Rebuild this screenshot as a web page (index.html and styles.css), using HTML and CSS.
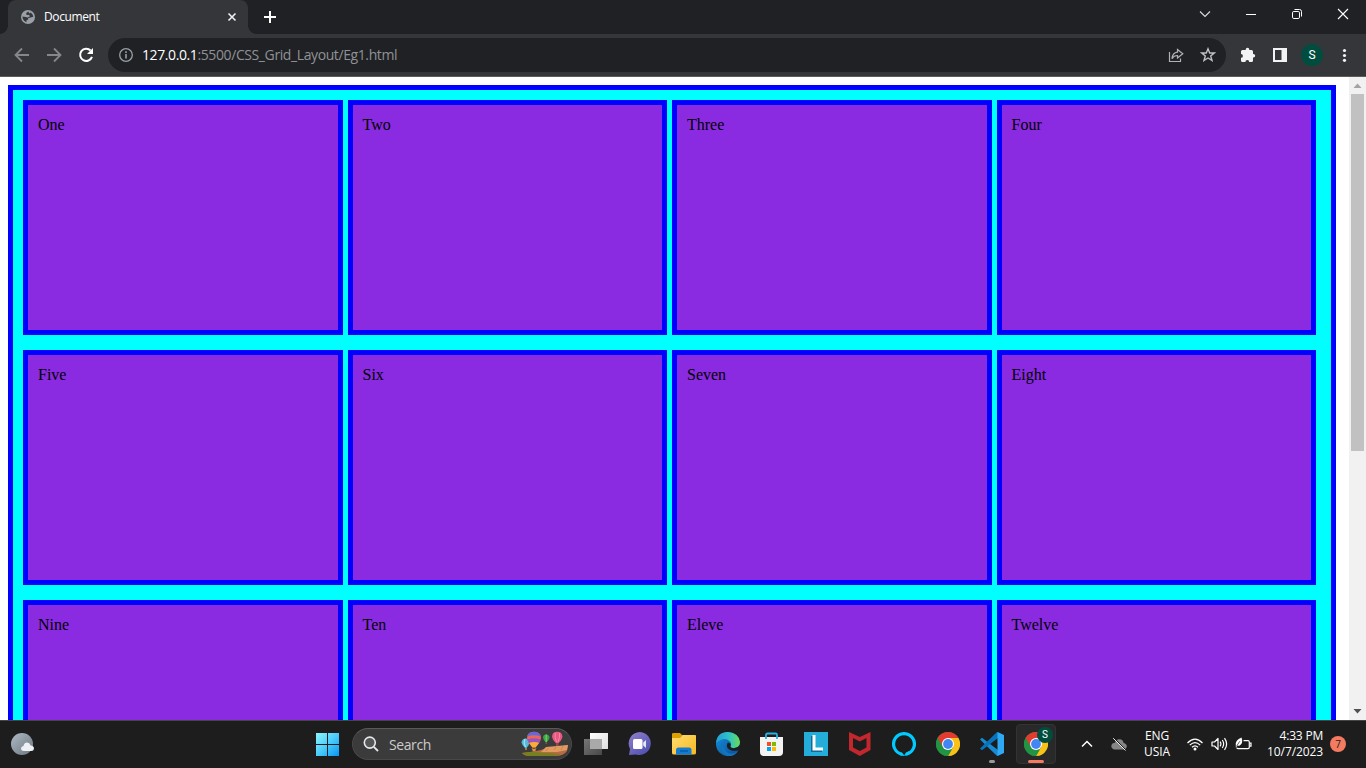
FILE: index.html
```html
<!DOCTYPE html>
<html lang="en">
<head>
<meta charset="utf-8">
<title>Document</title>
<link rel="stylesheet" href="styles.css">
</head>
<body>
<header class="tabstrip">
  <div class="tab">
    <svg class="favicon" width="14" height="14" viewBox="0 0 14 14"><circle cx="7" cy="7" r="7" fill="#9aa0a6"/><path d="M7.3 1.6Q5 2.6 5 4.3Q6.2 5.3 7.6 4.7Q9.2 5.2 8.6 6.7L6.5 7.4L4.5 6.9L1.5 6.6Q1.5 10.8 5.5 12.2L5.4 10.5L7.4 9.2L7 8.3L9.5 7.6L12.3 6.8Q12.2 4.2 9.6 2.5L8.3 3.4Z" fill="#35363a"/></svg>
    <span class="tab-title">Document</span>
    <svg class="tab-close" width="10" height="10" viewBox="0 0 10 10"><path d="M1.5 1.5L8.5 8.5M8.5 1.5L1.5 8.5" stroke="#f1f1f1" stroke-width="1.6"/></svg>
  </div>
  <svg class="new-tab" width="12" height="12" viewBox="0 0 12 12"><path d="M6 0V12M0 6H12" stroke="#fff" stroke-width="2"/></svg>
  <div class="window-controls">
    <svg width="46" height="28" viewBox="0 0 46 28"><path d="M18 11.5L23 16.5L28 11.5" fill="none" stroke="#ddd" stroke-width="1.1"/></svg>
    <svg width="46" height="28" viewBox="0 0 46 28"><path d="M18 14.5H28" stroke="#fff"/></svg>
    <svg width="46" height="28" viewBox="0 0 46 28"><g fill="none" stroke="#fff"><rect x="18.5" y="11.5" width="7" height="7" rx="1.3"/><path d="M20.5 9.5H25.5Q27.5 9.5 27.5 11.5V16.5"/></g></svg>
    <svg width="46" height="28" viewBox="0 0 46 28"><path d="M18 9L28 19M28 9L18 19" stroke="#fff" stroke-width="1.1"/></svg>
  </div>
</header>
<nav class="toolbar">
  <svg width="20" height="20" viewBox="0 0 20 20"><path d="M17 10H4M10 3.5L3.5 10L10 16.5" fill="none" stroke="#85878a" stroke-width="1.8"/></svg>
  <svg width="20" height="20" viewBox="0 0 20 20"><path d="M3 10H16M10 3.5L16.5 10L10 16.5" fill="none" stroke="#85878a" stroke-width="1.8"/></svg>
  <svg width="20" height="20" viewBox="0 0 20 20"><path d="M14.6 5.5A6.1 6.1 0 1 0 16 11.8" fill="none" stroke="#fff" stroke-width="2"/><path d="M17 3V9H11Z" fill="#fff"/></svg>
  <div class="omnibox">
    <svg class="info" width="16" height="16" viewBox="0 0 16 16"><circle cx="8" cy="8" r="6.3" fill="none" stroke="#9aa0a6" stroke-width="1.3"/><path d="M8 7V11.5M8 4.3V5.9" stroke="#9aa0a6" stroke-width="1.6"/></svg>
    <span class="url"><b>127.0.0.1</b>:5500/CSS_Grid_Layout/Eg1.html</span>
    <svg class="share" width="16" height="16" viewBox="0 0 16 16"><path d="M1.5 5V14.5H12.5V11.5" fill="none" stroke="#b0b2b5" stroke-width="1.2"/><path d="M9.5 2.5L14.8 6.8L9.5 11V8.5Q6 8.4 4 11.7Q4.5 5.7 9.5 5.2Z" fill="none" stroke="#b0b2b5" stroke-width="1.2"/></svg>
    <svg width="16" height="16" viewBox="0 0 16 16"><path d="M8 1.8L9.7 6H14.2L10.7 8.9L12 13.5L8 11L4 13.5L5.3 8.9L1.8 6H6.3Z" fill="none" stroke="#bdc1c6" stroke-width="1.4"/></svg>
  </div>
  <svg width="20" height="20" viewBox="0 0 20 20"><path d="M4.5 5H7.7V4.6A1.8 1.8 0 0 1 11.3 4.6V5H13.5Q15 5 15 6.5V9H15.4A1.8 1.8 0 0 1 15.4 12.6H15V15.5Q15 17 13.5 17H11.2A1.9 1.9 0 0 0 7.4 17H4.5Q3 17 3 15.5V12.8A1.9 1.9 0 0 0 3 9V6.5Q3 5 4.5 5Z" fill="#f1f3f4"/></svg>
  <svg width="20" height="20" viewBox="0 0 20 20"><path d="M3 3H17V17H3ZM5 5V15H11.5V5Z" fill="#f1f3f4" fill-rule="evenodd"/></svg>
  <span class="avatar">S</span>
  <svg width="20" height="20" viewBox="0 0 20 20" fill="#f1f3f4"><circle cx="10.5" cy="5.5" r="1.6"/><circle cx="10.5" cy="10.5" r="1.6"/><circle cx="10.5" cy="15.3" r="1.6"/></svg>
</nav>
<div class="viewport">
  <main class="page">
    <div class="grid">
      <div class="item">One</div><div class="item">Two</div><div class="item">Three</div><div class="item">Four</div>
      <div class="item">Five</div><div class="item">Six</div><div class="item">Seven</div><div class="item">Eight</div>
      <div class="item">Nine</div><div class="item">Ten</div><div class="item">Eleve</div><div class="item">Twelve</div>
    </div>
  </main>
  <aside class="scrollbar">
    <svg width="17" height="17" viewBox="0 0 17 17"><path d="M4.5 11L8.5 6.5L12.5 11Z" fill="#a3a3a3"/></svg>
    <div class="thumb"></div>
    <svg class="down" width="17" height="17" viewBox="0 0 17 17"><path d="M4.5 6L8.5 10.5L12.5 6Z" fill="#505050"/></svg>
  </aside>
</div>
<footer class="taskbar">
  <svg class="weather" width="24" height="24" viewBox="0 0 24 24"><defs><linearGradient id="moon" x1="0" y1="0" x2="1" y2="1"><stop stop-color="#b0bac4"/><stop offset="1" stop-color="#6c7680"/></linearGradient></defs><circle cx="11" cy="12" r="11" fill="url(#moon)"/><path d="M12.8 19Q10 18.6 10 16.2Q10.4 14.2 12.5 14Q13 10.8 16 10.6Q18.8 10.8 19.6 13.5Q23 13.8 23 16.5Q22.8 19 20.3 19Z" fill="#edf1f6"/></svg>
  <svg class="start" width="23" height="23" viewBox="0 0 23 23"><defs><linearGradient id="win" x1="0" y1="0" x2="23" y2="23" gradientUnits="userSpaceOnUse"><stop stop-color="#8df5fc"/><stop offset=".5" stop-color="#4cccfa"/><stop offset="1" stop-color="#0795f5"/></linearGradient></defs><path d="M0 0H11V11H0ZM12 0H23V11H12ZM0 12H11V23H0ZM12 12H23V23H12Z" fill="url(#win)"/></svg>
  <div class="search">
    <svg width="16" height="16" viewBox="0 0 16 16"><circle cx="6.8" cy="6.6" r="5.5" fill="#565656" stroke="#e4e8ed" stroke-width="1.6"/><path d="M10.8 10.8L15 15" stroke="#e4e8ed" stroke-width="1.8"/></svg>
    <span>Search</span>
    <svg class="balloons" width="48" height="26" viewBox="0 0 48 26">
      <path d="M1 22Q18 20 23 18L47 14L46 20Q43 25 34 25H7Q2 24 1 22Z" fill="#b96b42"/><path d="M25 16L47 14L46 19L36 21H20Z" fill="#e09a62"/><path d="M1 22Q10 20 23 22L40 23Q36 25 31 25H7Q3 24 1 22Z" fill="#75801f"/><path d="M27 17L25 20M35 16L33 19M42 15L40 19" stroke="#c67b4e" stroke-width=".8"/>
      <path d="M.5 11.5Q1 7.5 5 7.5Q8.4 8 8.5 11.5Q8.2 14.5 5.5 17H4Q1 14 .5 11.5Z" fill="#55b9dd"/><path d="M4 7.8Q2 12 4.5 16" fill="none" stroke="#b3e7ef"/><path d="M4 18H6" stroke="#a87848" stroke-width="2"/>
      <path d="M6 7Q6.3.8 13 .7Q19.7.8 20 7Q19.5 11 14.5 16.5H11.5Q6.2 11 6 7Z" fill="#ef6752"/><path d="M6.2 5.5Q7.4.9 13 .7Q18.6.9 19.8 5.5Q13 3 6.2 5.5Z" fill="#6269dd"/><path d="M6.1 8.5Q13 6 19.8 8.5L18.2 12Q13 10 8 12Z" fill="#9a54c0"/><path d="M8.2 12Q13 10 18 12L14.5 16.5H11.5Z" fill="#f5af37"/><path d="M11 17L12 19M15 17L14 19" stroke="#d59646" stroke-width=".7"/><path d="M11.5 19H14.5" stroke="#d59646" stroke-width="2.5"/>
      <path d="M22 6.5Q22.2 3.5 25.2 3.5Q28.2 3.7 28.5 6.5Q28 9 25.9 11H24.6Q22.3 9 22 6.5Z" fill="#35a64b"/><path d="M25.2 3.5V11" stroke="#8cd957"/><path d="M24.5 12H26" stroke="#a87848"/>
      <path d="M31 5.8Q31.2.7 36.2.7Q41.2.8 41.5 5.8Q41 9.2 37.3 12.6H35.2Q31.3 9.2 31 5.8Z" fill="#e95883"/><path d="M34.2 2Q33.5 6 35.5 11M38.5 2Q39.3 6 37 11" fill="none" stroke="#f58a9a"/><path d="M35 14H37.5" stroke="#9b5444" stroke-width="1.7"/>
    </svg>
  </div>
  <div class="apps">
    <span class="app"><svg width="24" height="24" viewBox="0 0 24 24"><defs><linearGradient id="tv1" x2="1" y2="1"><stop stop-color="#fff"/><stop offset="1" stop-color="#ddd"/></linearGradient><linearGradient id="tv2" x2="1" y2="1"><stop stop-color="#777"/><stop offset="1" stop-color="#484848"/></linearGradient></defs><path d="M0 7H18V23H0Z" fill="url(#tv2)"/><path d="M6 1H24V17H6Z" fill="url(#tv1)"/><path d="M6 7H18V17H6Z" fill="#a9a9a9"/></svg></span>
    <span class="app"><svg width="24" height="24" viewBox="0 0 24 24"><defs><linearGradient id="chat" x2=".8" y2="1"><stop stop-color="#9481cc"/><stop offset="1" stop-color="#4c50b0"/></linearGradient></defs><path d="M12 0A11.5 11.5 0 1 1 8 22.5L1 23L2 17A11.5 11.5 0 0 1 12 0Z" fill="url(#chat)"/><rect x="5" y="7" width="9.5" height="10" rx="1.5" fill="#fff"/><path d="M15.2 10.5L18 8V16L15.2 13.5Z" fill="#e4e5fb"/></svg></span>
    <span class="app"><svg width="24" height="24" viewBox="0 0 24 24"><defs><linearGradient id="folder" y2="1" x2="1"><stop stop-color="#ffdd71"/><stop offset="1" stop-color="#f6b820"/></linearGradient></defs><path d="M0 2Q0 1 1.5 1H8L10 3H22Q24 3 24 5V10H0Z" fill="#dda000"/><path d="M0 6H8L11 3H23Q24 3 24 4V21Q24 22.5 22 22.5H2Q0 22.5 0 21Z" fill="url(#folder)"/><path d="M4 22.5V18Q4 15.5 6.5 15.5H17Q19.5 15.5 19.5 18V22.5Z" fill="#147cd0"/><path d="M8 19H16" stroke="#0757a1" stroke-width="1.3"/></svg></span>
    <span class="app"><svg width="24" height="24" viewBox="0 0 24 24"><defs><linearGradient id="edgeTop"><stop stop-color="#219ed7"/><stop offset=".55" stop-color="#31c3c4"/><stop offset="1" stop-color="#68dc52"/></linearGradient><linearGradient id="edgeLow" x2="1" y2="1"><stop stop-color="#1594df"/><stop offset="1" stop-color="#0a4795"/></linearGradient></defs><circle cx="12" cy="12" r="12" fill="url(#edgeLow)"/><path d="M0 11Q1 0 12 0Q23 1 24 10Q24 15.5 18 16Q14 16 14.5 14Q16 12 14 9.5Q8 4 0 11Z" fill="url(#edgeTop)"/><path d="M8.5 11Q6.5 17 12 21Q17 23 22 19Q18 25 11 24Q4 21 5 14Q6 8 11 8Q9 9 8.5 11Z" fill="#1274bd"/><path d="M14.5 14Q14 16 18 16.2Q21.5 16.2 24 13V17L22.5 18.3Q15 20 11.5 16Q10 13 12 10.5Q15.5 11 14.5 14Z" fill="#1d1d1d"/></svg></span>
    <span class="app"><svg width="24" height="24" viewBox="0 0 24 24"><path d="M0 5H23V20Q23 24 19 24H4Q0 24 0 20Z" fill="#f3f3f3"/><path d="M6 7V3Q6 1.5 7.5 1.5H15.5Q17 1.5 17 3V7" fill="none" stroke="#28b0e6" stroke-width="1.8"/><path d="M7 10H11V14H7Z" fill="#f25022"/><path d="M12 10H16V14H12Z" fill="#7fba00"/><path d="M7 15H11V19H7Z" fill="#00a4ef"/><path d="M12 15H16V19H12Z" fill="#ffb900"/></svg></span>
    <span class="app"><svg width="24" height="24" viewBox="0 0 24 24"><path d="M0 0H24V24H0Z" fill="#24add9"/><path d="M9 4V18H18" fill="none" stroke="#116b99" stroke-width="4"/><path d="M10 3V17H19" fill="none" stroke="#fff" stroke-width="3"/></svg></span>
    <span class="app"><svg width="24" height="24" viewBox="0 0 24 24"><path d="M1 0L11.8 5L22.5 0V18L11.8 24L1 18ZM5 6V15.5L11.8 19L18.5 15.5V6L11.8 9.5Z" fill="#c1272d" fill-rule="evenodd"/></svg></span>
    <span class="app"><svg width="24" height="24" viewBox="0 0 24 24"><path d="M10 22.2A10.4 10.4 0 1 1 14 22.2" fill="none" stroke="#00caff" stroke-width="3.2"/><path d="M9 20.5Q12 21.5 12 24Q9.5 24 7.5 23ZM17 19Q13 20.5 12 24Q16 24 19 21Z" fill="#00caff"/></svg></span>
    <span class="app"><svg width="24" height="24" viewBox="0 0 24 24"><circle cx="12" cy="12" r="12" fill="#229342"/><path d="M1.6 6A12 12 0 0 1 22.4 6L12 12L6.8 15Z" fill="#e33b2e"/><path d="M12 6H22.4A12 12 0 0 1 12 24L17.2 15Z" fill="#fbc116"/><path d="M1.6 6L6.8 15L12 18H15.5L12 24A12 12 0 0 1 1.6 6Z" fill="#229342"/><circle cx="12" cy="12" r="6" fill="#fff"/><circle cx="12" cy="12" r="4.9" fill="#4285f4"/></svg></span>
    <span class="app running"><svg width="24" height="24" viewBox="0 0 24 24"><path d="M0 7.5L2 5.8L18 18V24L16.5 23.5Z" fill="#168bd2"/><path d="M0 16.5L2 18.2L18 6V0L16.5.5Z" fill="#0873bd"/><path d="M17.5 0L24 3V21L17.5 24Z" fill="#2eaaf4"/></svg></span>
    <span class="app active"><svg width="24" height="24" viewBox="0 0 24 24"><circle cx="12" cy="12" r="12" fill="#229342"/><path d="M1.6 6A12 12 0 0 1 22.4 6L12 12L6.8 15Z" fill="#e33b2e"/><path d="M12 6H22.4A12 12 0 0 1 12 24L17.2 15Z" fill="#fbc116"/><path d="M1.6 6L6.8 15L12 18H15.5L12 24A12 12 0 0 1 1.6 6Z" fill="#229342"/><circle cx="12" cy="12" r="6" fill="#fff"/><circle cx="12" cy="12" r="4.9" fill="#4285f4"/></svg><i class="profile">S</i></span>
  </div>
  <div class="tray">
    <svg class="chevron" width="12" height="8" viewBox="0 0 12 8"><path d="M1 6.5L6 1.5L11 6.5" fill="none" stroke="#fff" stroke-width="1.5"/></svg>
    <svg class="cloud" width="16" height="14" viewBox="0 0 16 14"><path d="M4 12.5Q.2 12 .3 8.7Q1 5.8 4 5.8Q5 2 8.5 2.2Q12 2.4 12.7 6Q15.8 6.5 15.8 9.5Q15.3 12.5 12.5 12.5Z" fill="#858585"/><path d="M3 1L15 13" stroke="#1d1d1d"/><path d="M2.2 1.2L14.5 13.5" stroke="#eee"/></svg>
    <div class="lang"><span>ENG</span><span>USIA</span></div>
    <svg class="wifi" width="16" height="13" viewBox="0 0 16 13"><g fill="none" stroke="#fff" stroke-width="1.2"><path d="M.5 5Q8-2.6 15.5 5"/><path d="M2.8 7.2Q8 2 13.2 7.2"/><path d="M5 9.3Q8 6.4 11 9.3"/></g><circle cx="8" cy="11" r="1.5" fill="#fff"/></svg>
    <svg class="sound" width="17" height="14" viewBox="0 0 17 14"><g fill="none" stroke="#fff" stroke-width="1.2"><path d="M1 5H3.5L7 1.5V12.5L3.5 9H1Z" stroke-linejoin="round"/><path d="M9 4.7Q10.8 7 9 9.3M11.3 3Q14 7 11.3 11M13.5 1.2Q17.7 7 13.5 12.8"/></g></svg>
    <svg class="battery" width="17" height="14" viewBox="0 0 17 14"><path d="M8.5 3.6H13Q14.3 3.6 14.3 5V10.3Q14.3 11.6 13 11.6H3Q1.8 11.6 1.8 10.5M15 6.1H16V9.1H15" fill="none" stroke="#fff" stroke-width="1.2"/><path d="M.8 8.2Q0 3.2 6.5.5Q8.4 5.8 5.3 8Q3.8 9.2 2.2 8.7L.8 10.6Z" fill="#fff"/><path d="M1.6 9L4.9 4.2" stroke="#1d1d1d" stroke-width=".7"/></svg>
    <div class="clock"><span class="time">4:33 PM</span><span>10/7/2023</span></div>
    <span class="count">7</span>
  </div>
</footer>
</body>
</html>
```
FILE: styles.css
```css
* { box-sizing: border-box; }
body { margin: 0; width: 1366px; height: 768px; overflow: hidden; display: flex; flex-direction: column; font-family: "Open Sans", "Noto Sans", sans-serif; }
svg { display: block; flex: none; }
.tabstrip { height: 34px; flex: none; background: #202124; display: flex; padding-left: 8px; }
.tab { position: relative; width: 240px; height: 34px; display: flex; align-items: center; padding: 0 11px 0 13px; background: #35363a; border-radius: 8px 8px 0 0; color: #fff; }
.tab::before, .tab::after { content: ""; position: absolute; bottom: 0; width: 8px; height: 8px; }
.tab::before { left: -8px; background: radial-gradient(circle at 0 0, #202124 7.5px, #35363a 8px); }
.tab::after { right: -8px; background: radial-gradient(circle at 100% 0, #202124 7.5px, #35363a 8px); }
.tab-title { margin-left: 9px; font-size: 12px; line-height: 16px; letter-spacing: -.4px; }
.tab-close { margin-left: auto; }
.new-tab { margin: 11px 0 0 16px; }
.window-controls { display: flex; margin-left: auto; }

.toolbar { height: 43px; flex: none; display: flex; align-items: center; gap: 12px; padding: 0 12px; background: #35363a; border-bottom: 1px solid #5b5b5e; }
.omnibox { flex: 1; height: 34px; display: flex; align-items: center; padding: 0 10px; border-radius: 17px; background: #202124; }
.url { margin-left: 8px; color: #8f9296; font-size: 14px; line-height: 20px; letter-spacing: -.4px; white-space: nowrap; }
.url b { color: #fff; font-weight: 400; }
.share { margin: 0 16px 0 auto; }
.avatar { width: 22px; height: 22px; margin: 0 -1px; border-radius: 50%; background: #004d40; color: #fff; font: 12px/22px Roboto, sans-serif; text-align: center; }

.viewport { flex: 1; min-height: 0; display: flex; overflow: hidden; background: #fff; }
.page { flex: 1; padding: 8px 13px 0 8px; }
.grid { height: 780px; display: grid; grid-template-columns: repeat(4, 1fr); grid-template-rows: repeat(3, 235px); row-gap: 15px; padding: 10px; border: 5px solid #00f; background: #0ff; }
.item { margin-right: 5px; padding: 10px; border: 5px solid #00f; background: blueviolet; color: #000; font: 16px/20px "Liberation Serif", "Times New Roman", serif; }
.scrollbar { width: 17px; display: flex; flex-direction: column; background: #f1f1f1; }
.thumb { height: 357px; margin: 0 2px; background: #c1c1c1; }
.down { margin-top: auto; }

.taskbar { height: 48px; flex: none; display: flex; align-items: center; padding-bottom: 1px; background: #1d1d1d; border-top: 1px solid #454545; color: #fff; }
.weather { margin-left: 11px; }
.start { margin-left: 281px; }
.search { width: 220px; height: 32px; margin-left: 13px; display: flex; align-items: center; padding: 0 2px 0 10px; border: 1px solid #484848; border-top-color: #5a5a5a; border-radius: 16px; background: #3b3b3b; color: #ccc; font-size: 14px; }
.search span { margin-left: 10px; letter-spacing: -.4px; }
.balloons { margin-left: auto; }
.apps { display: flex; align-items: center; margin-left: 2px; }
.app { position: relative; width: 44px; height: 40px; display: flex; align-items: center; justify-content: center; }
.running::after, .active::after { content: ""; position: absolute; bottom: 1px; left: 19px; width: 6px; height: 3px; border-radius: 2px; background: #999; }
.active { width: 40px; margin-left: 2px; border: 1px solid #333; border-radius: 4px; background: #292929; }
.active::after { left: 11px; bottom: 0; width: 16px; background: #f47b60; }
.profile { position: absolute; left: 20px; top: 2px; width: 16px; height: 16px; border-radius: 50%; background: #004d40; font: normal 10px/16px Roboto, sans-serif; text-align: center; color: #fff; }
.tray { flex: 1; display: flex; align-items: center; font-size: 12px; line-height: 16px; }
.chevron { margin-left: 25px; }
.cloud { margin-left: 18px; }
.lang { width: 36px; margin-left: 12px; display: flex; flex-direction: column; text-align: center; letter-spacing: -.1px; }
.wifi { margin-left: 12px; }
.sound { margin-left: 8px; }
.battery { margin-left: 7px; }
.clock { margin-left: auto; display: flex; flex-direction: column; text-align: right; letter-spacing: -.1px; }
.time { letter-spacing: -.2px; }
.count { width: 16px; height: 16px; margin: 0 20px 0 7px; border-radius: 50%; background: #f47b60; color: #222; font-size: 10px; line-height: 16px; text-align: center; }
```
